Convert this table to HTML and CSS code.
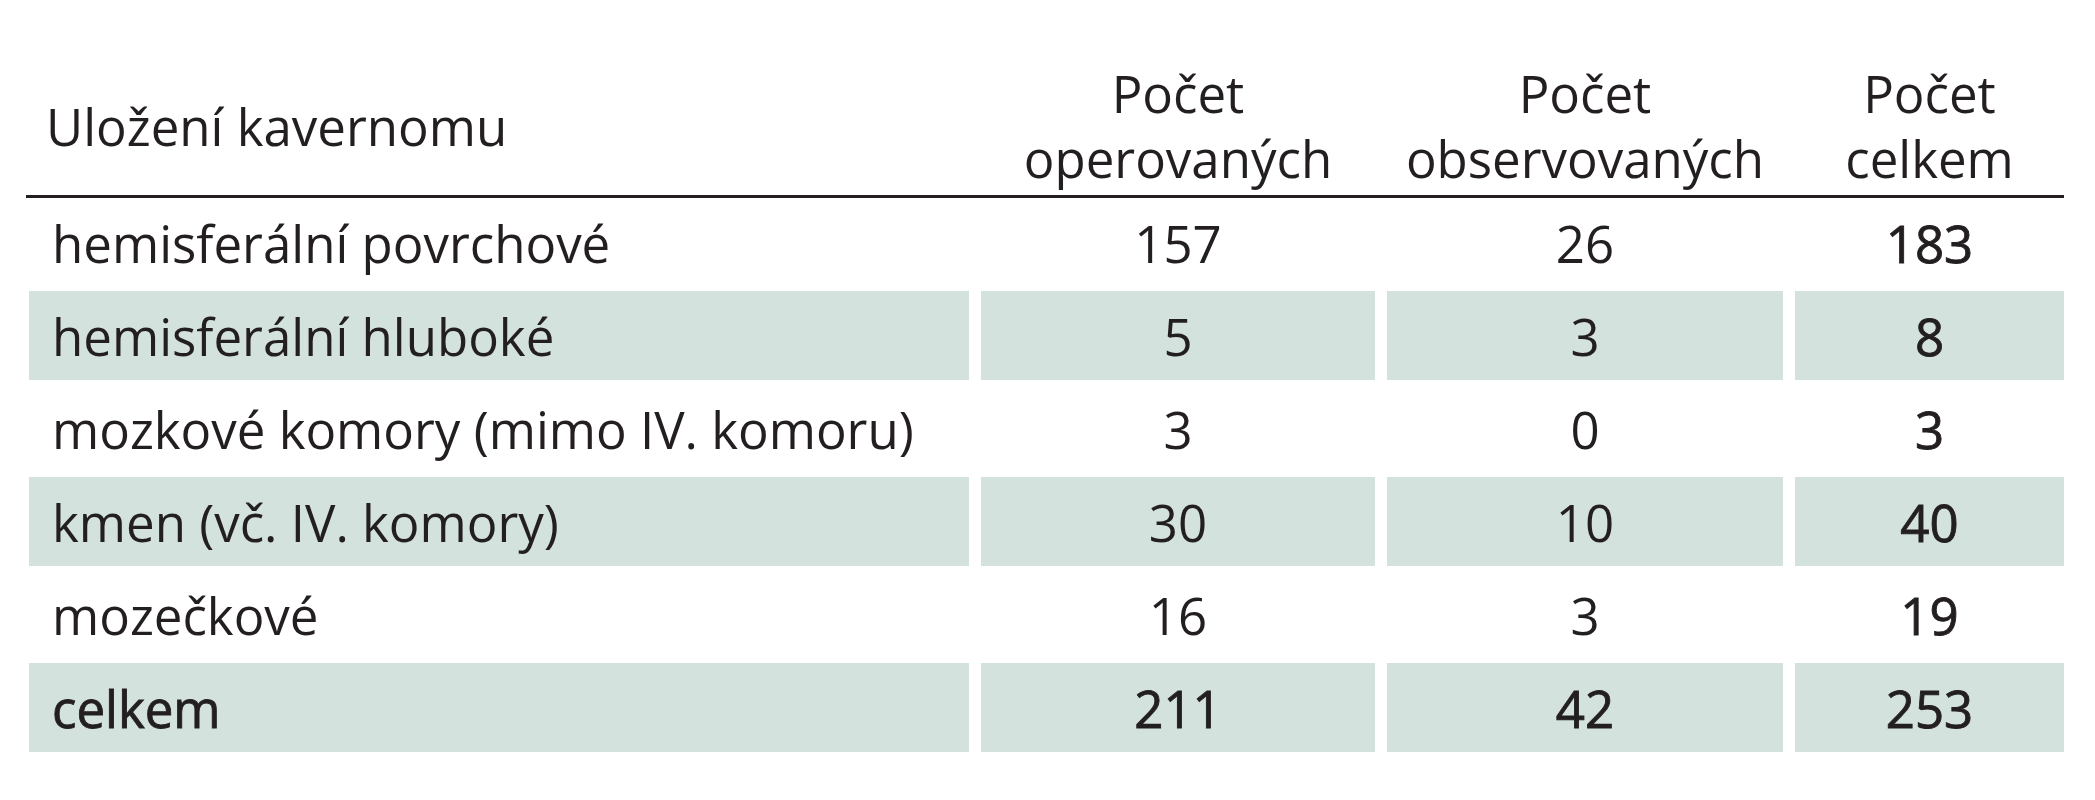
FILE: index.html
```html
<!DOCTYPE html>
<html lang="cs">
<head>
<meta charset="utf-8">
<title>Uložení kavernomu</title>
<link rel="stylesheet" href="styles.css">
</head>
<body>
<div class="table">
  <div class="row head">
    <div class="cell label">Uložení kavernomu</div>
    <div class="cell num">Počet<br>operovaných</div>
    <div class="cell num">Počet<br>observovaných</div>
    <div class="cell num">Počet<br>celkem</div>
  </div>
  <div class="row">
    <div class="cell label">hemisferální povrchové</div>
    <div class="cell num">157</div>
    <div class="cell num">26</div>
    <div class="cell num total">183</div>
  </div>
  <div class="row shaded">
    <div class="cell label">hemisferální hluboké</div>
    <div class="cell num">5</div>
    <div class="cell num">3</div>
    <div class="cell num total">8</div>
  </div>
  <div class="row">
    <div class="cell label">mozkové komory (mimo IV. komoru)</div>
    <div class="cell num">3</div>
    <div class="cell num">0</div>
    <div class="cell num total">3</div>
  </div>
  <div class="row shaded">
    <div class="cell label">kmen (vč. IV. komory)</div>
    <div class="cell num">30</div>
    <div class="cell num">10</div>
    <div class="cell num total">40</div>
  </div>
  <div class="row">
    <div class="cell label">mozečkové</div>
    <div class="cell num">16</div>
    <div class="cell num">3</div>
    <div class="cell num total">19</div>
  </div>
  <div class="row shaded sum">
    <div class="cell label">celkem</div>
    <div class="cell num">211</div>
    <div class="cell num">42</div>
    <div class="cell num total">253</div>
  </div>
</div>
</body>
</html>
```

FILE: styles.css
```css
html, body {
  margin: 0;
  padding: 0;
  background: #ffffff;
}

body {
  font-family: "Open Sans", "Noto Sans", "DejaVu Sans", sans-serif;
  font-size: 51px;
  color: #231f20;
}

.table {
  display: flex;
  flex-direction: column;
  gap: 4px;
  margin-left: 29px;
  width: 2035px;
}

.row {
  display: grid;
  grid-template-columns: 940px 394px 396px 269px;
  column-gap: 12px;
  height: 89px;
}

.row.head {
  height: auto;
  padding: 61px 0 4px 3px;
  margin-left: -3px;
  border-bottom: 3px solid #231f20;
  margin-bottom: -4px;
  line-height: 65px;
}

.cell {
  display: flex;
  align-items: center;
  white-space: nowrap;
}

.cell.label {
  padding-left: 23px;
}

.head .cell.label {
  padding-left: 17px;
}

.cell.num {
  justify-content: center;
  text-align: center;
}

.shaded .cell {
  background: #d3e2dd;
}

.total,
.sum .cell {
  -webkit-text-stroke: 0.9px #231f20;
}
```
